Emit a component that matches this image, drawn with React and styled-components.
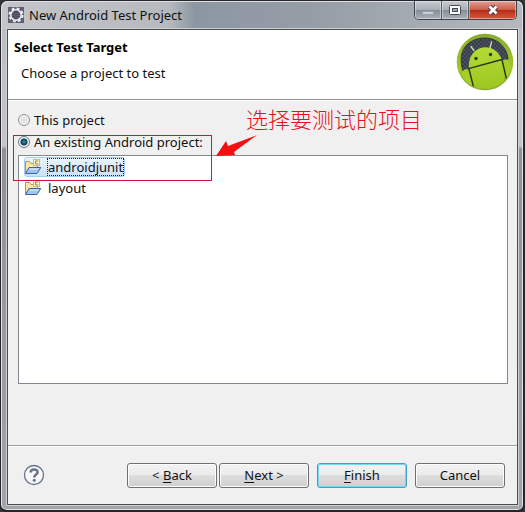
import React, { useState } from "react";
import styled, { createGlobalStyle } from "styled-components";

const projects = ["androidjunit", "layout"];

export default function App() {
  const [target, setTarget] = useState("existing");
  const [selected, setSelected] = useState("androidjunit");
  return (
    <>
      <GlobalStyle />
      <Window>
        <TitleBar>
          <EclipseIcon />
          <Title>New Android Test Project</Title>
          <WindowButtons>
            <WindowButton aria-label="Minimize">
              <svg width="12" height="11" viewBox="0 0 12 11">
                <rect x="0.5" y="6.5" width="11" height="3" fill="#c9ced5" stroke="#9aa1a9" />
              </svg>
            </WindowButton>
            <WindowButton aria-label="Maximize">
              <svg width="12" height="11" viewBox="0 0 12 11">
                <rect x="0.5" y="0.5" width="11" height="9" rx="1" fill="#fff" stroke="#464a55" />
                <rect x="3.5" y="3.5" width="5" height="3" fill="#9da4ae" stroke="#464a55" />
              </svg>
            </WindowButton>
            <WindowButton $close aria-label="Close">
              <svg width="14" height="12" viewBox="0 0 14 12">
                <path d="M3.5 2.5 L10.5 9.5 M10.5 2.5 L3.5 9.5" stroke="#5b3440" strokeWidth="4.6" />
                <path d="M3.5 2.5 L10.5 9.5 M10.5 2.5 L3.5 9.5" stroke="#fff" strokeWidth="2.8" />
              </svg>
            </WindowButton>
          </WindowButtons>
        </TitleBar>
        <Client>
          <Header>
            <div>
              <h1>Select Test Target</h1>
              <p>Choose a project to test</p>
            </div>
            <AndroidLogo />
          </Header>
          <Content>
            <Option>
              <input
                type="radio"
                name="target"
                checked={target === "this"}
                onChange={() => setTarget("this")}
              />
              This project
            </Option>
            <Option>
              <input
                type="radio"
                name="target"
                checked={target === "existing"}
                onChange={() => setTarget("existing")}
              />
              An existing Android project:
            </Option>
            <ProjectList>
              {projects.map((name) => (
                <li key={name}>
                  <Project
                    $selected={name === selected}
                    aria-pressed={name === selected}
                    onClick={() => setSelected(name)}
                  >
                    <FolderIcon />
                    <span>{name}</span>
                  </Project>
                </li>
              ))}
            </ProjectList>
            <Highlight />
            <Note>选择要测试的项目</Note>
            <Arrow width="42" height="22" viewBox="0 0 42 22">
              <path d="M41 0 L18 17 L19 20 L0 21 L10 6 L12 11 Z" fill="#f80d10" />
            </Arrow>
          </Content>
          <Footer>
            <HelpButton aria-label="Help">
              <svg width="22" height="22" viewBox="0 0 22 22" fill="none">
                <circle cx="11" cy="11" r="9.5" fill="#f8f9fb" stroke="#66738b" strokeWidth="1.3" />
                <path
                  d="M7.6 8.6 C7.6 4.4 14.6 4.4 14.6 8.2 C14.6 10.6 11.2 10.6 11.2 13.6"
                  stroke="#66738b"
                  strokeWidth="2.5"
                />
                <circle cx="11.2" cy="16.3" r="1.5" fill="#66738b" />
              </svg>
            </HelpButton>
            <ButtonPair>
              <Button>
                &lt; <u>B</u>ack
              </Button>
              <Button>
                <u>N</u>ext &gt;
              </Button>
            </ButtonPair>
            <Button $primary>
              <u>F</u>inish
            </Button>
            <Button>Cancel</Button>
          </Footer>
        </Client>
      </Window>
    </>
  );
}

function EclipseIcon() {
  return (
    <svg width="16" height="16" viewBox="0 0 16 16">
      <rect width="16" height="16" fill="#5f6074" />
      <circle cx="8" cy="8" r="6.4" fill="none" stroke="#e9ebf2" strokeWidth="2.4" strokeDasharray="2.8 2.2" />
      <circle cx="8" cy="8" r="5.2" fill="#4a4a5e" stroke="#e9ebf2" strokeWidth="1.6" />
      <path d="M4.4 6.5 H11.6 M4 8.5 H12 M4.6 10.5 H11.4" stroke="#686980" strokeWidth="0.7" />
    </svg>
  );
}

function AndroidLogo() {
  return (
    <svg width="58" height="58" viewBox="0 0 58 58">
      <defs>
        <linearGradient id="rim" x1="0" y1="0" x2="0" y2="1">
          <stop offset="0" stopColor="#86ad2b" />
          <stop offset="0.6" stopColor="#a0c62c" />
          <stop offset="1" stopColor="#86a936" />
        </linearGradient>
        <linearGradient id="robot" x1="0" y1="0" x2="0" y2="1">
          <stop offset="0" stopColor="#b3db39" />
          <stop offset="1" stopColor="#9bc51c" />
        </linearGradient>
        <pattern id="mesh" width="4" height="4" patternUnits="userSpaceOnUse">
          <rect width="4" height="4" fill="#383d49" />
          <path d="M0 0 H2 V2 H0 Z M2 2 H4 V4 H2 Z" fill="#4b505e" />
        </pattern>
        <clipPath id="disc">
          <circle cx="29" cy="29" r="27" />
        </clipPath>
      </defs>
      <circle cx="29" cy="29" r="28.3" fill="url(#rim)" />
      <path d="M7 38 C0 16 14 5 29 5 C42 5 51 15 52 26 L42 29 L13 37 Z" fill="url(#mesh)" stroke="#323743" />
      <g clipPath="url(#disc)">
        <path d="M13 36 C10 12 39 6 46 27 L50 60 H19 Z" fill="url(#robot)" />
        <path d="M6 39 Q9 34 13 37 L18 60 H6 Z M46 28 Q51 24 53 29 L57 46 L50 49 Z" fill="#a5ce27" />
        <path d="M12.5 35.6 L46 26.5 M13 36 L18 56 M46 27 L51 48" fill="none" stroke="#2b321d" strokeWidth="1.4" />
      </g>
      <path d="M18 17.5 L15 13.5 M34 15 L35.5 9" stroke="#d1dfa8" strokeWidth="1.3" strokeLinecap="round" />
      <circle cx="20" cy="25.5" r="1.7" fill="#303a17" />
      <circle cx="34.5" cy="21.5" r="1.7" fill="#303a17" />
    </svg>
  );
}

function FolderIcon() {
  return (
    <svg width="17" height="16" viewBox="0 0 17 16">
      <path d="M0.5 14 V2.5 H4.5 L6 4.5 H12.5 V9" fill="#fbe7a2" stroke="#a8976c" />
      <path d="M0.5 14.5 L4 8.5 H15.8 L12 14.5 Z" fill="#9fc6f0" stroke="#3f63a0" />
      <path d="M5 10 H13.5" stroke="#e4f1fd" />
      <rect x="8.5" y="0.5" width="6" height="6" fill="#fff4c7" stroke="#c9bc8c" />
      <path d="M13.2 2 H10.6 V5 H13.4" fill="none" stroke="#8a8362" />
    </svg>
  );
}

const GlobalStyle = createGlobalStyle`
  * {
    box-sizing: border-box;
  }
  body {
    margin: 0;
    background: #33343d;
    color: #111;
    font: 13px/18px "Noto Sans", "Noto Sans CJK SC", sans-serif;
  }
  button {
    font: inherit;
    color: inherit;
  }
`;

const Window = styled.div`
  display: flex;
  flex-direction: column;
  min-height: 100vh;
  padding: 0 5px 5px 6px;
  border: 1px solid #25262b;
  border-width: 1px 2px 2px 1px;
  border-radius: 7px;
  background: linear-gradient(#b9bec4, #c3c5c8 145px, #8f9194 148px, #a3a4a6);
  box-shadow: inset 0 0 0 1px #dfe2e5;
`;

const TitleBar = styled.header`
  display: flex;
  align-items: center;
  height: 28px;
  margin: 0 -4px 0 -5px;
  padding: 0 5px 0 6px;
  border-radius: 6px 6px 0 0;
  background: linear-gradient(90deg, #c3c5c9, #b6babe 32%, #8c97a3 37%, #969da6 60%, #a5abb2 80%, #b5b9bd);
  box-shadow: inset 0 1px #dfe2e5;
`;

const Title = styled.span`
  flex: 1;
  padding-left: 5px;
`;

const WindowButtons = styled.div`
  display: flex;
  align-self: flex-start;
  overflow: hidden;
  border: 1px solid #3f434b;
  border-top: 0;
  border-radius: 0 0 5px 5px;
`;

const WindowButton = styled.button`
  display: grid;
  place-items: center;
  width: ${(props) => (props.$close ? "47px" : "27px")};
  height: 18px;
  padding: 0;
  border: 0;
  border-right: ${(props) => (props.$close ? "0" : "1px solid #555a63")};
  background: ${(props) =>
    props.$close
      ? "linear-gradient(#e0a197, #cf5c4c 48%, #b52c19 50%, #d8583c)"
      : "linear-gradient(#c7cbd1, #a9afb7 48%, #858d98 50%, #a9b0b8)"};
  box-shadow: inset 0 0 0 1px #ffffff66;
`;

const Client = styled.main`
  flex: 1;
  display: flex;
  flex-direction: column;
  border: 1px solid #4b4d51;
  background: #f0f0f0;
  box-shadow: 0 0 0 1px #cfd1d3;
`;

const Header = styled.div`
  display: flex;
  justify-content: space-between;
  height: 70px;
  padding: 3px 3px 0 6px;
  border-bottom: 1px solid #929292;
  background: #fff;
  h1 {
    margin: 5px 0 8px;
    font-size: 13px;
    line-height: 18px;
    color: #000;
  }
  p {
    margin: 0;
    padding-left: 7px;
  }
`;

const Content = styled.div`
  position: relative;
  flex: 1;
  display: flex;
  flex-direction: column;
  padding: 8px 9px 61px 10px;
  border-top: 1px solid #fff;
`;

const Option = styled.label`
  display: flex;
  align-items: center;
  gap: 4px;
  height: 22px;
  input {
    appearance: none;
    width: 12px;
    height: 12px;
    margin: 0;
    border: 1px solid #8e8f8f;
    border-radius: 50%;
    background: radial-gradient(#dcdfe2, #f2f2f2);
    box-shadow: inset 0 0 0 1px #f4f4f4;
  }
  input:checked {
    border-color: #6f7d86;
    background: radial-gradient(circle, #5fc3da, #16748c 1px, #123c50 3px, #dfe6ea 4px);
  }
`;

const ProjectList = styled.ul`
  flex: 1;
  margin: 2px 0 0;
  padding: 1px 5px;
  border: 1px solid #828790;
  background: #fff;
  list-style: none;
  li {
    height: 21px;
  }
`;

const Project = styled.button`
  display: flex;
  align-items: center;
  gap: 6px;
  height: 20px;
  padding: 0 1px 0 0;
  border: 1px solid ${(props) => (props.$selected ? "#a9cdf0" : "transparent")};
  border-radius: 3px;
  background: ${(props) => (props.$selected ? "linear-gradient(#eaf4fe, #c9e1fb)" : "none")};
  line-height: 16px;
  span {
    outline: ${(props) => (props.$selected ? "1px dotted #222" : "none")};
  }
`;

const Highlight = styled.div`
  position: absolute;
  top: 34px;
  left: 5px;
  width: 199px;
  height: 46px;
  border: 1px solid #c8183e;
  pointer-events: none;
`;

const Note = styled.div`
  position: absolute;
  top: 2px;
  left: 238px;
  color: #e8101a;
  font: 300 22px/30px "Noto Sans CJK SC", sans-serif;
  white-space: nowrap;
`;

const Arrow = styled.svg`
  position: absolute;
  top: 34px;
  left: 208px;
`;

const Footer = styled.footer`
  display: flex;
  align-items: center;
  gap: 8px;
  height: 59px;
  padding: 0 12px 0 15px;
  border-top: 1px solid #a0a0a0;
  box-shadow: inset 0 1px #fff;
`;

const HelpButton = styled.button`
  display: flex;
  margin-right: auto;
  padding: 0;
  border: 0;
  background: none;
`;

const ButtonPair = styled.div`
  display: flex;
  gap: 2px;
`;

const Button = styled.button`
  width: 90px;
  height: 25px;
  padding: 0;
  border: 1px solid ${(props) => (props.$primary ? "#3c9fc4" : "#707070")};
  border-radius: 3px;
  background: linear-gradient(#f2f2f2, #ebebeb 48%, #dddddd 50%, #cfcfcf);
  box-shadow: inset 0 0 0 1px ${(props) => (props.$primary ? "#79d7f5" : "#fcfcfc")};
  line-height: 18px;
  u {
    text-underline-offset: 2px;
  }
`;
